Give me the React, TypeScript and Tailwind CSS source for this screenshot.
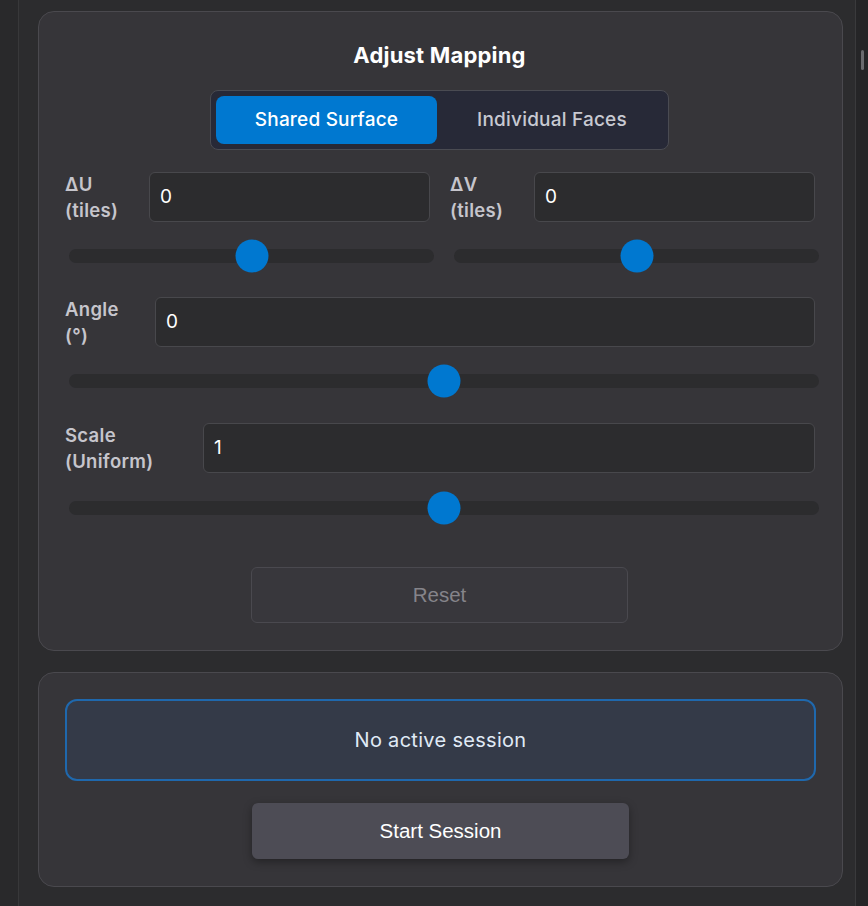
import React from "react";

const SF = "font-['Inter','Noto_Sans',sans-serif]";
const HV = "font-['Liberation_Sans',Arial,sans-serif]";

function Slider({ pct = 50 }: { pct?: number }) {
  return (
    <div className="relative ml-1 flex h-[34px] items-center">
      <div className="h-[14px] w-full rounded-full bg-[#2c2c2e]" />
      <div
        className="absolute top-1/2 h-[33px] w-[33px] -translate-x-1/2 -translate-y-1/2 rounded-full bg-[#0078d0]"
        style={{ left: `${pct}%` }}
      />
    </div>
  );
}

function Field({
  label,
  sub,
  value,
  labelW,
}: {
  label: string;
  sub: string;
  value: string;
  labelW: string;
}) {
  return (
    <div className="mr-1 flex items-center">
      <div className={`${labelW} shrink-0 text-[18.5px] font-semibold leading-[26px] tracking-[0.3px] text-[#c6c5cc]`}>
        <div>{label}</div>
        <div>{sub}</div>
      </div>
      <div className="flex h-[50px] flex-1 items-center rounded-md border-[1.5px] border-[#48484c] bg-[#2c2c2e] px-[10px] text-[19px] text-white">
        {value}
      </div>
    </div>
  );
}

export default function App() {
  return (
    <div className={`flex h-[906px] w-[868px] overflow-hidden bg-[#2c2c2e] ${SF}`}>
      {/* left rail */}
      <div className="w-[19px] shrink-0 border-r border-[#38383a] bg-[#29292b]" />

      <div className="flex flex-1 flex-col gap-[21px] pl-[19px] pr-[12px] pt-[11px]">
        {/* Adjust mapping card */}
        <div className="rounded-[16px] border-[1.5px] border-[#4a494e] bg-[#363539] pb-[27px] pl-[26px] pr-[23px] pt-[29px]">
          <h2 className="pr-[5px] text-center text-[22px] font-bold leading-7 tracking-[0.2px] text-white">
            Adjust Mapping
          </h2>

          <div className="mt-[21px] flex justify-center pr-[5px]">
            <div className="flex h-[60px] w-[459px] items-center gap-[4px] rounded-lg border-[1.5px] border-[#4a4b52] bg-[#272937] p-[5px]">
              <div className="flex h-[48px] w-[221px] items-center justify-center rounded-lg bg-[#0078d0] text-[19px] font-medium tracking-[0.2px] text-white">
                Shared Surface
              </div>
              <div className="flex h-[48px] flex-1 items-center justify-center text-[19px] font-medium tracking-[0.2px] text-[#c8c9d2]">
                Individual Faces
              </div>
            </div>
          </div>

          <div className="mt-[21px] grid grid-cols-2 gap-x-[16px]">
            <div>
              <Field label="ΔU" sub="(tiles)" value="0" labelW="w-[84px]" />
              <div className="mt-[16px]">
                <Slider />
              </div>
            </div>
            <div>
              <Field label="ΔV" sub="(tiles)" value="0" labelW="w-[84px]" />
              <div className="mt-[16px]">
                <Slider />
              </div>
            </div>
          </div>

          <div className="mt-[23px]">
            <Field label="Angle" sub="(°)" value="0" labelW="w-[90px]" />
            <div className="mt-[16px]">
              <Slider />
            </div>
          </div>

          <div className="mt-[24px]">
            <Field label="Scale" sub="(Uniform)" value="1" labelW="w-[138px]" />
            <div className="mt-[17px]">
              <Slider />
            </div>
          </div>

          <div className="mt-[42px] flex justify-center pr-[5px]">
            <button
              className={`h-[56px] w-[377px] rounded-md border border-[#4a494f] bg-[#38373c] text-[20.5px] text-[#85848a] ${HV}`}
            >
              Reset
            </button>
          </div>
        </div>

        {/* Session card */}
        <div className="flex flex-col items-center rounded-[16px] border-[1.5px] border-[#4a494e] bg-[#363539] px-[26px] pb-[27px] pt-[26px]">
          <div className="flex h-[82px] w-full items-center justify-center rounded-xl border-2 border-[#1f68ad] bg-[#343a48] text-[20px] tracking-[0.3px] text-[#e0eaf6]">
            No active session
          </div>
          <button
            className={`mt-[22px] h-[56px] w-[377px] rounded-md bg-[#4d4c55] text-[20.5px] text-white shadow-[0_3px_8px_rgba(0,0,0,0.35)] ${HV}`}
          >
            Start Session
          </button>
        </div>
      </div>

      {/* right rail with scrollbar */}
      <div className="relative w-[13px] shrink-0 border-l border-[#3a3a3c] bg-[#252527]">
        <div className="absolute left-[5px] top-[50px] h-[20px] w-[3px] rounded-full bg-[#6a6a6e]" />
      </div>
    </div>
  );
}
